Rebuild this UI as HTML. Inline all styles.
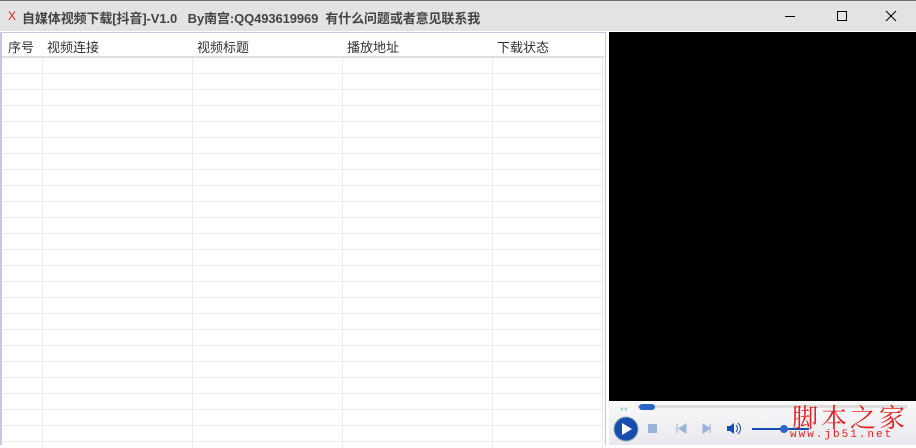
<html><head><style>
body{margin:0;width:916px;height:445px;overflow:hidden;background:#fff;font-family:"Liberation Sans","Noto Sans CJK SC",sans-serif;position:relative}
.tb{position:absolute;left:0;top:0;width:916px;height:31px;background:#e3e3e3;border-top:1px solid #6e6e6e;box-sizing:border-box}
.t{position:absolute;left:22px;top:7px;font-size:13px;font-weight:bold;color:#444;letter-spacing:-0.1px}
.x{position:absolute;left:8px;top:8px;font-size:12px;color:#e02020}
.lp{position:absolute;left:0;top:32px;width:606px;height:413px;border-left:2px solid #c8c8dc;border-top:1px solid #c8c8dc;box-sizing:border-box;border-right:1px solid #c8c8dc;background:#fff;
background-image:repeating-linear-gradient(to bottom,transparent 0,transparent 15px,#ececec 15px,#ececec 16px);background-position:0 25px;}
.h{position:absolute;top:4px;font-size:13px;color:#333}
.hl{position:absolute;left:0;top:23px;width:602px;height:2px;background:#e0e0e0}
.c{position:absolute;top:25px;width:1px;height:390px;background:#ececec}
.hdr{position:absolute;left:0;top:0;width:602px;height:23px;background:#fff}
</style></head><body>
<div class="tb"><span class="x">X</span><span class="t">自媒体视频下载[抖音]-V1.0&nbsp;&nbsp; By南宫:QQ493619969&nbsp; 有什么问题或者意见联系我</span>
<svg style="position:absolute;left:785px;top:9px" width="120" height="14"><line x1="0" y1="6.5" x2="10" y2="6.5" stroke="#000"/><rect x="52.5" y="1.5" width="9" height="9" fill="none" stroke="#000"/><path d="M101 1L111 11M111 1L101 11" stroke="#000"/></svg></div>
<div class="lp">
<div class="hdr"></div>
<span class="h" style="left:6px">序号</span><span class="h" style="left:45px">视频连接</span><span class="h" style="left:195px">视频标题</span><span class="h" style="left:345px">播放地址</span><span class="h" style="left:495px">下载状态</span>
<div class="hl"></div>
<div class="c" style="left:40px"></div><div class="c" style="left:190px"></div><div class="c" style="left:340px"></div><div class="c" style="left:490px"></div><div class="c" style="left:600px"></div>
</div>
<div style="position:absolute;left:609px;top:32px;width:307px;height:369px;background:#000"></div>
<div style="position:absolute;left:609px;top:401px;width:307px;height:44px;background:linear-gradient(#fafafa,#e8e8ee)"></div>
<svg style="position:absolute;left:609px;top:401px" width="307" height="44">
<path d="M14 6l-3 2 3 2zM18 6l-3 2 3 2z" fill="#9cc"/>
<rect x="28" y="4" width="270" height="3" fill="#ddd"/>
<rect x="30" y="3" width="16" height="6" rx="3" fill="#2c64c8"/>
<circle cx="17" cy="28" r="12" fill="#1a4cb0" stroke="#8aa" /><path d="M13 22v12l10-6z" fill="#fff"/>
<rect x="39" y="23" width="9" height="9" fill="#9ab4d8"/>
<path d="M68 23v9M77 23l-7 4.5 7 4.5z" fill="#9ab4d8" stroke="#9ab4d8"/>
<path d="M101 23v9M94 23l7 4.5-7 4.5z" fill="#9ab4d8" stroke="#9ab4d8"/>
<path d="M118 25h3l4-3v11l-4-3h-3z" fill="#1a4cb0"/><path d="M127 24q3 3.5 0 7M129 22q5 5.5 0 11" stroke="#1a4cb0" fill="none"/>
<line x1="143" y1="28" x2="200" y2="28" stroke="#1a4cb0" stroke-width="2"/>
<circle cx="175" cy="28" r="4" fill="#2c64c8"/>
</svg>
<div style="position:absolute;left:792px;top:398px;font-size:26px;color:#e02020;font-family:'Noto Serif CJK SC',serif;letter-spacing:3px">脚本之家</div>
<div style="position:absolute;left:790px;top:429px;font-size:11px;color:#e02020;font-family:'Liberation Mono',monospace;letter-spacing:2px">www.jb51.net</div>
</body></html>
